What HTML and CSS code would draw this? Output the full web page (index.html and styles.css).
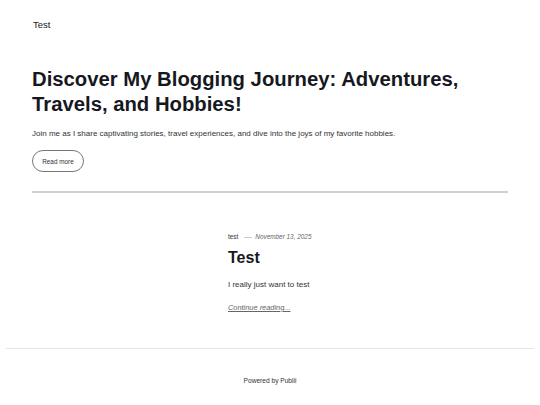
FILE: index.html
```html
<!DOCTYPE html>
<html lang="en">
<head>
<meta charset="utf-8">
<title>Test</title>
<link rel="stylesheet" href="styles.css">
</head>
<body>
<header class="site-header">
  <a class="logo" href="#">Test</a>
</header>
<main>
  <section class="hero">
    <h1 class="hero-title">Discover My Blogging Journey: Adventures, Travels, and Hobbies!</h1>
    <p class="hero-text">Join me as I share captivating stories, travel experiences, and dive into the joys of my favorite hobbies.</p>
    <a class="btn" href="#">Read more</a>
  </section>
  <hr class="divider">
  <article class="post">
    <div class="post-meta"><span class="author">test</span><span class="dash"></span><time>November 13, 2025</time></div>
    <h2 class="post-title">Test</h2>
    <p class="post-text">I really just want to test</p>
    <a class="post-more" href="#">Continue reading...</a>
  </article>
</main>
<footer class="site-footer">
  <p>Powered by Publii</p>
</footer>
</body>
</html>
```
FILE: styles.css
```css
* { box-sizing: border-box; }
html, body { margin: 0; padding: 0; background: #fff; }
body {
  font-family: "Liberation Sans", Arial, sans-serif;
  color: #17181e;
}
a { color: inherit; text-decoration: none; }

.site-header {
  padding: 19px 33px 0;
  height: 30px;
}
.logo { font-size: 9.5px; line-height: 12px; display: block; }

.hero { padding: 37px 32px 0; }
.hero-title {
  margin: 0;
  font-size: 20.3px;
  line-height: 25px;
  font-weight: 700;
  max-width: 460px;
}
.hero-text {
  margin: 10.5px 0 0;
  font-size: 8px;
  line-height: 11px;
  color: #333;
}
.btn {
  display: flex;
  align-items: center;
  justify-content: center;
  margin-top: 11.5px;
  width: 52px;
  height: 22px;
  border: 1px solid #777;
  border-radius: 11px;
  font-size: 6.4px;
  color: #333;
}

.divider {
  margin: 19px 32px 0;
  border: 0;
  height: 2px;
  background: #d0d0d0;
}

.post { padding: 40px 0 0 228px; }
.post-meta {
  display: flex;
  align-items: center;
  font-size: 6.4px;
  line-height: 8px;
  color: #333;
}
.dash { width: 8px; height: 1px; background: #ccc; margin: 0 3px 0 6px; }
.post-meta time { font-style: italic; color: #666; }
.post-title {
  margin: 7px 0 0;
  font-size: 16px;
  line-height: 20px;
  font-weight: 700;
}
.post-text {
  margin: 12px 0 0;
  font-size: 8px;
  line-height: 10px;
  color: #333;
}
.post-more {
  display: block;
  margin-top: 13px;
  font-size: 7.4px;
  line-height: 10px;
  font-style: italic;
  text-decoration: underline;
  color: #666;
}

.site-footer {
  margin: 35px 6px 0;
  border-top: 1px solid #e6e6e6;
  padding-top: 28px;
  text-align: center;
}
.site-footer p { margin: 0; font-size: 6.6px; line-height: 8px; color: #333; }
```
